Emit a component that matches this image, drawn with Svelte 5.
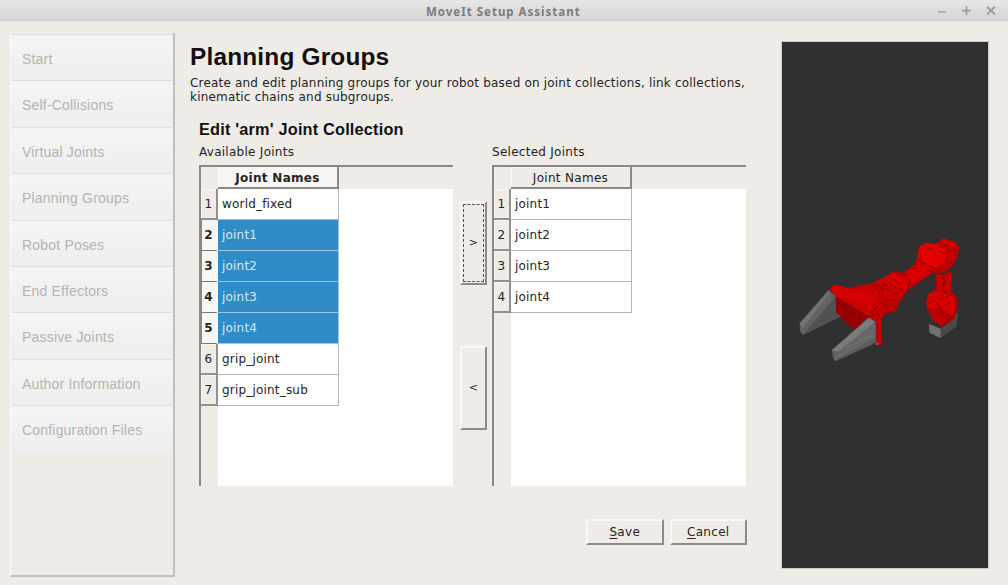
<script>
  const steps = ['Start', 'Self-Collisions', 'Virtual Joints', 'Planning Groups', 'Robot Poses', 'End Effectors', 'Passive Joints', 'Author Information', 'Configuration Files'];
  const available = [
    { name: 'world_fixed' },
    { name: 'joint1', selected: true },
    { name: 'joint2', selected: true },
    { name: 'joint3', selected: true },
    { name: 'joint4', selected: true },
    { name: 'grip_joint' },
    { name: 'grip_joint_sub' }
  ];
  const chosen = ['joint1', 'joint2', 'joint3', 'joint4'].map((name) => ({ name }));
</script>

{#snippet jointTable(title, rows, highlighted)}
  <section class="collection">
    <div class="label">{title}</div>
    <div class="table">
      <div class="head">
        <div class="corner"></div>
        <div class="colname" class:bold={highlighted}>Joint Names</div>
      </div>
      <div class="rows">
        {#each rows as row, i}
          <div class="row" class:selected={row.selected}>
            <div class="num">{i + 1}</div>
            <div class="cell">{row.name}</div>
          </div>
        {/each}
      </div>
    </div>
  </section>
{/snippet}

<div class="window">
  <header>
    <span class="wintitle">MoveIt Setup Assistant</span>
    <svg class="controls" width="66" height="21" viewBox="0 0 66 21" fill="none" stroke="#9c9c9c" stroke-width="1.7">
      <path d="M2 11.8H10" stroke-width="1.2" />
      <path d="M26 10.7H35M30.5 6.2V15.2" />
      <path d="M51 6.8L59 14.4M59 6.8L51 14.4" stroke-width="1.9" />
    </svg>
  </header>
  <main>
    <nav>
      {#each steps as step}
        <div class="step">{step}</div>
      {/each}
    </nav>
    <div class="content">
      <h1>Planning Groups</h1>
      <p>Create and edit planning groups for your robot based on joint collections, link collections,<br />kinematic chains and subgroups.</p>
      <div class="editor">
        <h2>Edit 'arm' Joint Collection</h2>
        <div class="tables">
          {@render jointTable('Available Joints', available, true)}
          <div class="movers">
            <button class="move add"><span>&gt;</span></button>
            <button class="move remove"><span>&lt;</span></button>
          </div>
          {@render jointTable('Selected Joints', chosen, false)}
        </div>
        <div class="actions">
          <button class="action"><span><u>S</u>ave</span></button>
          <button class="action"><span><u>C</u>ancel</span></button>
        </div>
      </div>
    </div>
    <div class="viewport">
      <svg width="206" height="160" viewBox="6 0 618 480">
        <path fill="#5a5c5c" d="M447 312L483 328L532 278L529 318L482 354L449 338Z" />
        <path fill="#707272" d="M447 312L482 326V354L449 338Z" />
        <path fill="#484a4a" d="M482 326L529 284V318L482 354Z" />
        <path fill="#b50000" d="M466 166L517 154L514 214L532 236L530 270L523 298L488 321L457 300L445 274L437 246L447 221L469 206Z" />
        <path fill="#d80000" d="M447 222L475 214L517 231L525 260L516 290L484 266L450 270L440 246Z" />
        <path fill="#cc0000" d="M471 163L487 171V214L471 210ZM501 160L513 158L509 216L499 213Z" />
        <path fill="#c00000" d="M456 276L489 292V318L459 299Z" />
        <path stroke="#980000" stroke-width="2.5" fill="none" d="M450 269L480 265L514 245M482 267L514 290L490 318M461 228L482 238L507 228M489 174V210M443 250L466 241L482 265" />
        <path fill="#c00000" d="M274 190L319 174L338 154L370 159L407 130L419 79L440 68L469 71L489 54L526 66L538 82L532 111L517 139L492 157L458 159L402 197L386 208L357 249L348 274L307 281L276 247Z" />
        <path fill="#e40000" d="M416 83L440 69L478 76L502 100L498 125L466 142L429 128L414 111Z" />
        <path fill="#d80000" d="M487 57L525 68L535 84L514 83L497 72ZM374 159L441 132L458 151L402 191L383 175ZM280 188L340 158L384 182L381 199L346 209L310 184Z" />
        <path fill="#cc0000" d="M310 211L346 204L370 219L349 241L308 240Z" />
        <path stroke="#990000" stroke-width="2.5" fill="none" d="M420 118Q430 84 466 84L498 105L492 139L468 151L420 119M478 79L500 73L528 84L523 119L500 144M374 160L390 177L385 203L352 224L317 207M402 189L447 151L461 158M280 190L309 208L302 246L346 266L351 241L309 238M327 174L365 195M318 180L350 207M301 184L334 206" />
        <path fill="#970000" d="M168 231L266 291L226 329L167 282Z" />
        <path fill="#c80000" d="M148 204L165 194L205 204L277 190L308 212L303 254L314 282L303 299L307 374H289V307L267 292L168 231Z" />
        <path fill="#d60000" d="M151 207L166 194L205 204L183 216L263 210L291 237L275 257L205 236L167 232Z" />
        <path stroke="#850000" stroke-width="2.5" fill="none" d="M170 232L265 290L304 245M180 245L250 298M180 255L241 308M178 267L232 317M276 195L300 220M267 292L294 279L303 299" />
        <path fill="#626464" d="M59 310L146 209L166 229L168 280L183 289L69 345L60 333Z" />
        <path fill="#737575" d="M59 310L147 214L148 220L69 323Z" />
        <path fill="#505252" d="M70 344L166 230L168 280L181 290Z" />
        <path fill="#5c5e5e" d="M156 390L266 292L288 309V367L265 379L166 424L158 411Z" />
        <path fill="#7a7c7c" d="M156 390L267 295L286 305L173 395Z" />
        <path fill="#646666" d="M173 397L286 310V352L167 419Z" />
        <path stroke="#7e8080" stroke-width="1.5" fill="none" d="M157 388L168 401L167 422M174 397L283 309M172 410L284 350M195 387L281 343M230 357L279 348" />
        <circle cx="291" cy="371" r="5" fill="#a44" />
      </svg>
    </div>
  </main>
</div>

<style>
  :global(body) { margin: 0; }
  * { box-sizing: border-box; }
  .window { width: 1008px; height: 585px; background: #efece7; font: 12px/14px "DejaVu Sans", sans-serif; letter-spacing: .19px; color: #242424; overflow: hidden; }
  header { height: 22px; background: linear-gradient(#e6e6e6, #d5d5d5); border-bottom: 1px solid #e2e0dc; display: grid; grid-template-columns: 426px 1fr 72px; }
  .wintitle { grid-column: 2; font: bold 11.5px/23px "Noto Sans", sans-serif; letter-spacing: 1px; color: #7c7c7c; white-space: nowrap; }
  .controls { display: block; }
  main { display: flex; height: 563px; padding: 11px 20px 8px 10px; }
  nav { width: 165px; height: 544px; border: solid #c3c0bc; border-width: 0 2px 2px 0; border-left: 1px solid #faf9f7; padding-top: 1px; }
  .step { height: 46.4px; padding: 0 11px; font: 14px/48px "Liberation Sans", sans-serif; color: #b4b4b4; background: linear-gradient(#f5f5f5, #eee); border-top: 1px solid #dfdfdf; white-space: nowrap; }
  .content { width: 572px; padding: 9px 0 0 15px; }
  h1 { margin: 0; font: bold 24.4px/29px "Liberation Sans", sans-serif; color: #111; white-space: nowrap; }
  p { margin: 5px 0 0; white-space: nowrap; }
  .editor { padding: 15px 0 0 9px; }
  h2 { margin: 0; font: bold 16.3px/20px "Liberation Sans", sans-serif; color: #111; }
  .tables { display: flex; margin-top: 6px; }
  .collection { width: 254px; }
  .label { height: 20px; line-height: 14px; letter-spacing: .27px; }
  .table { height: 321px; background: linear-gradient(90deg, #efece7 17px, #fff 17px); border: solid #8b8986; border-width: 2px 0 0 2px; }
  .head { display: flex; height: 22px; background: #efece7; }
  .corner { width: 17px; }
  .colname { width: 121px; text-align: center; line-height: 22px; letter-spacing: .3px; border: solid #8b8986; border-width: 0 2px 2px 0; box-shadow: inset 1px 1px #faf9f7; }
  .bold { font-weight: bold; background: #f7f6f4; }
  .row { display: flex; width: 138px; height: 31px; line-height: 30px; }
  .num { width: 17px; text-align: center; background: #efece7; border: solid #93918e; border-width: 0 2px 2px 0; box-shadow: inset 1px 1px #f8f7f5; }
  .cell { flex: 1; padding-left: 4px; background: #fff; border: solid #b5b5b5; border-width: 0 1px 1px 0; white-space: nowrap; }
  .selected .cell { background: #308cc6; color: #d5eaf6; border-color: #a0c4dc; }
  .selected .num { background: #f8f7f5; font-weight: bold; border-right-color: #f8f7f5; box-shadow: inset 1px 0 #8b8986; border-bottom-width: 1px; border-bottom-color: #777; }
  .movers { width: 39px; padding: 56px 5px 0 7px; display: flex; flex-direction: column; gap: 61px; }
  button { font: inherit; font-size: 12px; letter-spacing: .3px; color: inherit; background: #efece7; border: 2px solid; border-color: #f8f7f5 #8e8b87 #8e8b87 #f8f7f5; padding: 0; margin: 0; }
  .move { width: 27px; height: 84px; font-size: 11px; }
  .add { padding: 1px; }
  .add span { display: grid; place-items: center; height: 78px; border: 1px dashed #555; }
  .actions { display: flex; gap: 6px; margin: 33px 0 0 387px; }
  .action { width: 78px; height: 26px; }
  u { text-underline-offset: 2px; text-decoration-thickness: 1px; }
  .viewport { width: 206px; height: 526px; margin: 9px 0 0 35px; padding-top: 178px; background: #303030; outline: 1px solid #d0cdc9; }
  .viewport svg { display: block; }
</style>
